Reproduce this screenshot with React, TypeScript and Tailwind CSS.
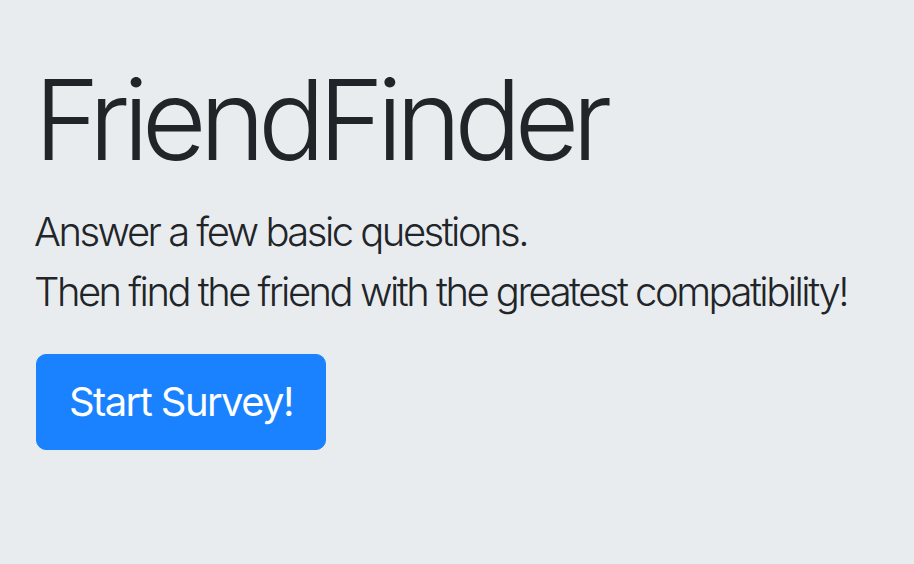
import React from "react";

/* ── Jumbotron landing ── */

export default function App() {
  return (
    <div
      className="min-h-screen w-full bg-[#e9ecef] text-[#212529]"
      style={{ fontFamily: "Inter, 'Noto Sans', sans-serif" }}
    >
      <div className="px-[36px] pt-[52px]">
        <h1 className="mb-[16px] ml-[-2px] whitespace-nowrap text-[112px] font-light leading-[134px] tracking-[-0.065em]">
          FriendFinder
        </h1>
        <p className="mb-[32px] ml-[-2px] whitespace-nowrap text-[40px] font-light leading-[60px] tracking-[-0.063em]">
          Answer a few basic questions.
          <br />
          Then find the friend with the greatest compatibility!
        </p>
        <button
          type="button"
          className="h-[96px] whitespace-nowrap rounded-[10px] border border-[#1a82ff] bg-[#1a82ff] px-[32px] text-[40px] font-normal leading-[60px] tracking-[-0.04em] text-white"
        >
          Start Survey!
        </button>
      </div>
    </div>
  );
}
